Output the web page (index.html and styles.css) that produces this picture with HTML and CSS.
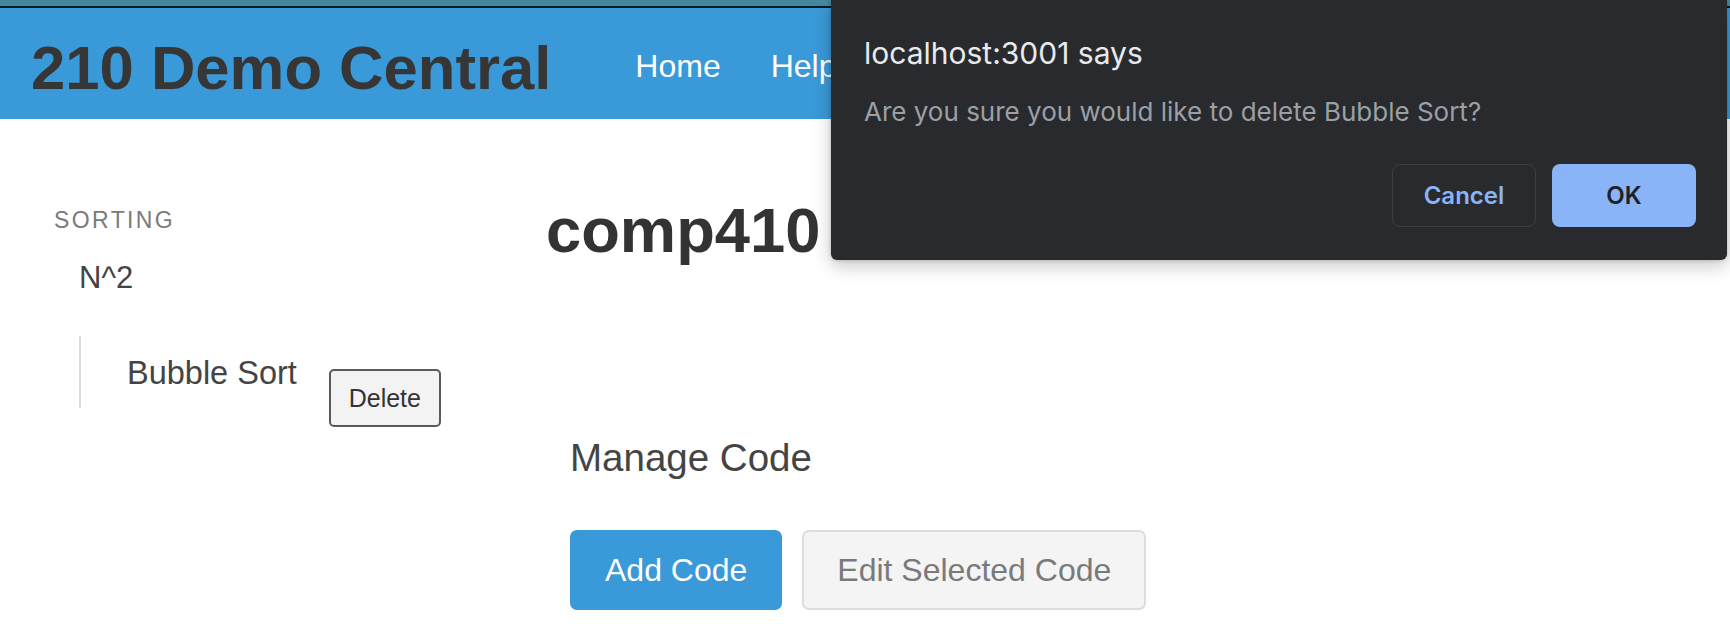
FILE: index.html
```html
<!DOCTYPE html>
<html lang="en">
<head>
<meta charset="utf-8">
<title>210 Demo Central</title>
<link rel="stylesheet" href="styles.css">
</head>
<body>
<div class="topstrip"></div>
<header class="navbar">
  <div class="brand">210 Demo Central</div>
  <nav class="nav">
    <a class="nav-link" href="#">Home</a>
    <a class="nav-link" href="#">Help</a>
  </nav>
</header>
<main class="layout">
  <aside class="sidebar">
    <div class="section-label">SORTING</div>
    <div class="group-title">N^2</div>
    <div class="sublist">
      <span class="item-name">Bubble Sort</span>
      <button class="btn-delete">Delete</button>
    </div>
  </aside>
  <section class="content">
    <h1 class="page-title">comp410</h1>
    <div class="manage">
      <h3 class="manage-title">Manage Code</h3>
      <div class="actions">
        <button class="btn btn-primary">Add Code</button>
        <button class="btn btn-secondary">Edit Selected Code</button>
      </div>
    </div>
  </section>
</main>
<div class="dialog">
  <div class="dialog-title">localhost:3001 says</div>
  <div class="dialog-message">Are you sure you would like to delete Bubble Sort?</div>
  <div class="dialog-buttons">
    <button class="dlg-btn dlg-cancel">Cancel</button>
    <button class="dlg-btn dlg-ok">OK</button>
  </div>
</div>
</body>
</html>
```
FILE: styles.css
```css
* { box-sizing: border-box; }
html, body { margin: 0; padding: 0; background: #fff; }
body {
  font-family: "Liberation Sans", Arial, sans-serif;
  color: #333;
  width: 1730px;
  height: 632px;
  overflow: hidden;
  position: relative;
}
.topstrip {
  height: 8px;
  background: #44889f;
  border-bottom: 2px solid #0e1a1f;
}
.navbar {
  height: 111px;
  background: #3a99d8;
  display: flex;
  align-items: center;
  padding: 4px 0 0 31px;
}
.brand {
  font-size: 61.6px;
  line-height: 62px;
  padding-top: 4px;
  font-weight: 700;
  color: #363636;
  white-space: nowrap;
}
.nav {
  display: flex;
  gap: 50px;
  margin-left: 84px;
}
.nav-link {
  font-size: 32px;
  line-height: 40px;
  color: #fff;
  text-decoration: none;
}
.layout {
  display: grid;
  grid-template-columns: 546px 1fr;
}
.sidebar {
  padding: 87px 0 0 54px;
}
.section-label {
  font-size: 23px;
  line-height: 28px;
  letter-spacing: 2.4px;
  color: #7a7a7a;
}
.group-title {
  margin-top: 26px;
  padding-left: 25px;
  font-size: 31px;
  line-height: 36px;
  color: #444;
}
.sublist {
  margin: 40px 0 0 25px;
  height: 72px;
  border-left: 2px solid #dcdcdc;
  padding: 19px 0 0 46px;
  display: flex;
  align-items: flex-start;
}
.item-name {
  font-size: 32.5px;
  line-height: 36px;
  color: #444;
  white-space: nowrap;
}
.btn-delete {
  margin: 14px 0 0 32px;
  width: 112px;
  height: 58px;
  flex: none;
  font-family: "Liberation Sans", Arial, sans-serif;
  font-size: 25px;
  color: #333;
  background: #f3f3f3;
  border: 2px solid #5a5a5a;
  border-radius: 5px;
  padding: 0;
}
.content {
  padding-top: 75px;
}
.page-title {
  margin: 0;
  font-size: 63.3px;
  line-height: 72px;
  font-weight: 700;
  color: #333;
}
.manage {
  padding-left: 24px;
  margin-top: 170px;
}
.manage-title {
  margin: 0;
  font-size: 38.5px;
  line-height: 44px;
  font-weight: 400;
  color: #444;
}
.actions {
  display: flex;
  gap: 20px;
  margin-top: 50px;
}
.btn {
  height: 80px;
  padding: 0 33px;
  font-family: "Liberation Sans", Arial, sans-serif;
  font-size: 32px;
  border-radius: 7px;
  border: 2px solid transparent;
}
.btn-primary {
  background: #3a99d8;
  border-color: #3a99d8;
  color: #fff;
}
.btn-secondary {
  background: #f4f4f4;
  border-color: #dddddd;
  color: #7a7a7a;
}
.dialog {
  position: absolute;
  top: 0;
  left: 831px;
  width: 896px;
  height: 260px;
  background: #292a2d;
  border-radius: 0 0 6px 6px;
  box-shadow: 0 6px 18px rgba(0, 0, 0, 0.22), 0 0 4px rgba(0, 0, 0, 0.2);
  padding: 35px 31px 0 33px;
  font-family: Inter, "Noto Sans", sans-serif;
}
.dialog-title {
  font-size: 30px;
  line-height: 36px;
  color: #e8eaed;
}
.dialog-message {
  margin-top: 25px;
  font-size: 26px;
  line-height: 32px;
  color: #9aa0a6;
}
.dialog-buttons {
  margin-top: 36px;
  display: flex;
  justify-content: flex-end;
  gap: 16px;
}
.dlg-btn {
  width: 144px;
  height: 63px;
  border-radius: 8px;
  font-family: Inter, "Noto Sans", sans-serif;
  font-size: 24px;
  font-weight: 600;
  padding: 0;
}
.dlg-cancel {
  background: #292a2d;
  border: 1.5px solid #3c4043;
  color: #8ab4f8;
}
.dlg-ok {
  background: #8ab4f8;
  border: none;
  color: #202124;
}
```
